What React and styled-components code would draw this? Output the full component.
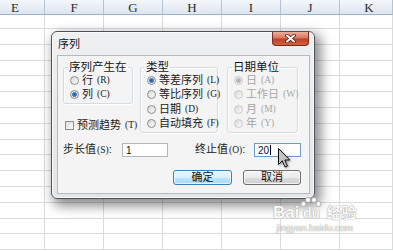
import styled, { createGlobalStyle } from "styled-components";

const GlobalStyle = createGlobalStyle`
  html, body {
    margin: 0;
    padding: 0;
    background: #fff;
  }
  body {
    font-family: "Liberation Sans", "Noto Sans CJK SC", sans-serif;
  }
  * {
    box-sizing: border-box;
  }
`;

const Page = styled.div`
  position: relative;
  width: 393px;
  height: 251px;
  overflow: hidden;
  background: #fff;
`;

const Sheet = styled.div`
  display: grid;
  grid-template-columns: 45px repeat(5, 59px) 1fr;
  grid-template-rows: 15px 14px repeat(14, 15.8px);
`;

const ColHead = styled.div`
  display: flex;
  align-items: center;
  justify-content: center;
  padding: ${(p) => p.$pad || "0"};
  background: linear-gradient(#f4f7fb, #dde5ef);
  border-right: 1px solid #b3c2d4;
  border-bottom: 1px solid #9db2c8;
  font-family: "Liberation Serif", serif;
  font-size: 13px;
  line-height: 1;
  color: #2a2a2a;
`;

const Cell = styled.div`
  border-right: 1px solid #d9dbde;
  border-bottom: 1px solid #d9dbde;
`;

const Dialog = styled.div`
  position: absolute;
  left: 51px;
  top: 31px;
  width: 264px;
  height: 168px;
  display: flex;
  flex-direction: column;
  background: linear-gradient(#eef0f2, #e3e6e9);
  border: 1px solid #4f5256;
  border-radius: 6px;
  box-shadow: inset 0 0 0 1px rgba(255, 255, 255, 0.8),
    4px 5px 12px 2px rgba(0, 0, 0, 0.45);
`;

const TitleBar = styled.div`
  height: 23px;
  flex: none;
  display: flex;
  justify-content: space-between;
  padding: 0 5px 0 6px;
`;

const Title = styled.span`
  margin-top: 7px;
  font-size: 11px;
  line-height: 11px;
  color: #151515;
`;

const CloseButton = styled.div`
  width: 37px;
  height: 14px;
  display: flex;
  align-items: center;
  justify-content: center;
  background: linear-gradient(#eab0a0, #d77459 48%, #c23e22 52%, #d0633f);
  border: 1px solid #7b2c1e;
  border-top: none;
  border-radius: 0 0 4px 4px;
`;

const Client = styled.div`
  flex: 1;
  margin: 0 4px 4px 5px;
  padding: 6px 8px 0 5px;
  display: flex;
  flex-direction: column;
  background: #f4f4f4;
  border: 1px solid #b6b9bd;
`;

const TopSection = styled.div`
  display: flex;
  align-items: flex-start;
`;

const Column = styled.div`
  display: flex;
  flex-direction: column;
  width: ${(p) => p.$w}px;
  margin-right: ${(p) => p.$gap || 0}px;
`;

const Group = styled.fieldset`
  margin: 0 ${(p) => p.$gap || 0}px 0 0;
  padding: 0 0 1px 6px;
  min-width: 0;
  width: ${(p) => p.$w}px;
  border: 1px solid #d3dce3;
  border-radius: 3px;
  box-shadow: inset 1px 1px 0 #fff, 1px 1px 0 #fff;
`;

const Legend = styled.legend`
  padding: 0 1px;
  margin-left: -2px;
  font-size: 11.5px;
  line-height: 11px;
  color: #141414;
`;

const Option = styled.div`
  display: flex;
  align-items: center;
  gap: 3px;
  height: ${(p) => p.$h || 14.5}px;
  font-size: 11px;
  line-height: 11px;
  white-space: nowrap;
  color: ${(p) => (p.$disabled ? "#a5a5a5" : "#1b1b1b")};
`;

const Radio = styled.span`
  flex: none;
  width: 9px;
  height: 9px;
  border-radius: 50%;
  border: 1px solid ${(p) => (p.$disabled ? "#c9c9c9" : "#8c8c8c")};
  background: ${(p) =>
    p.$checked
      ? p.$disabled
        ? "radial-gradient(circle, #b5b5b5 0 2px, #ececec 2.6px)"
        : "radial-gradient(circle, #1d4ea6 0, #4c88d9 2.2px, #e4e6e8 2.8px)"
      : "linear-gradient(135deg, #d8d8d8, #fbfbfb)"};
`;

const Check = styled.span`
  flex: none;
  width: 9px;
  height: 9px;
  border: 1px solid #8e8f8f;
  background: linear-gradient(135deg, #dcdcdc, #fdfdfd);
`;

const Key = styled.span`
  margin-left: 1px;
  font-family: "Liberation Serif", serif;
  font-size: 9.5px;
`;

const CheckRow = styled(Option)`
  margin-top: 15px;
  height: 12px;
  padding-left: 2px;
`;

const ValuesRow = styled.div`
  display: flex;
  align-items: center;
  margin-top: 10px;
  height: 14px;
`;

const Field = styled.div`
  display: flex;
  align-items: center;
  margin-right: ${(p) => p.$gap || 0}px;
`;

const FieldLabel = styled.span`
  width: 59px;
  font-size: 11px;
  line-height: 11px;
  white-space: nowrap;
  color: #1b1b1b;
`;

const TextBox = styled.div`
  width: ${(p) => p.$w}px;
  height: 14px;
  display: flex;
  align-items: center;
  padding-left: 3px;
  background: #fff;
  border: 1px solid ${(p) => (p.$focus ? "#6d9acb" : "#b3b6ba")};
  font-family: "Liberation Sans", sans-serif;
  font-size: 10px;
  color: #111;
`;

const Caret = styled.span`
  width: 1px;
  height: 10px;
  margin-left: 1px;
  background: #000;
`;

const ButtonRow = styled.div`
  display: flex;
  justify-content: flex-end;
  gap: 11px;
  margin-top: 13px;
`;

const Button = styled.div`
  width: ${(p) => p.$w}px;
  height: 15px;
  display: flex;
  align-items: center;
  justify-content: center;
  font-size: 11px;
  line-height: 11px;
  color: #111;
  border: 1px solid ${(p) => (p.$default ? "#3c7fb1" : "#707070")};
  border-radius: 3px;
  background: ${(p) =>
    p.$default
      ? "linear-gradient(#eaf6fd, #d9f0fc 50%, #bee6fd 51%, #a7d9f5)"
      : "linear-gradient(#f4f4f4, #ebebeb 50%, #dddddd 51%, #cfcfcf)"};
  box-shadow: inset 0 0 0 1px rgba(255, 255, 255, 0.7);
`;

const Cursor = styled.svg`
  position: absolute;
  left: 278px;
  top: 148px;
  filter: drop-shadow(1px 1px 1px rgba(0, 0, 0, 0.4));
`;

const Watermark = styled.div`
  position: absolute;
  left: 273px;
  top: 197px;
  display: flex;
  flex-direction: column;
  align-items: center;
  color: #fbfbfb;
  text-shadow: 0 0 1px #8f8f8f, 0 0 1px #a0a0a0;
`;

const MarkRow = styled.div`
  display: flex;
  align-items: flex-end;
`;

const Bai = styled.span`
  font-weight: bold;
  font-size: 17px;
  line-height: 15px;
`;

const Du = styled.div`
  display: flex;
  flex-direction: column;
  align-items: center;
  margin: 0 2px 0 1px;
  font-weight: bold;
  font-size: 14px;
  line-height: 13px;
`;

const Jingyan = styled.span`
  font-size: 15px;
  line-height: 15px;
  font-weight: bold;
  margin-left: 2px;
`;

const Domain = styled.span`
  margin-top: 3px;
  font-size: 9.5px;
  line-height: 9px;
`;

const columns = [
  { name: "E", pad: "0 14px 0 0" },
  { name: "F" },
  { name: "G" },
  { name: "H" },
  { name: "I" },
  { name: "J" },
  { name: "K", pad: "0 0 0 6px" },
];

const rows = Array.from({ length: 15 }, (_, i) => i);

function CloseGlyph() {
  return (
    <svg width="11" height="9" viewBox="0 0 11 9">
      <path d="M2 1.5 L9 7.5 M9 1.5 L2 7.5" stroke="#5a1a0e" strokeWidth="3.6" strokeLinecap="round" />
      <path d="M2 1.5 L9 7.5 M9 1.5 L2 7.5" stroke="#fff" strokeWidth="2" strokeLinecap="round" />
    </svg>
  );
}

function Paw() {
  return (
    <svg width="22" height="10" viewBox="0 0 22 10">
      <g fill="#fbfbfb" stroke="#a3a3a3" strokeWidth="0.9">
        <ellipse cx="3.5" cy="7" rx="2.6" ry="2.6" />
        <ellipse cx="8" cy="3" rx="2.6" ry="2.6" />
        <ellipse cx="14" cy="3" rx="2.6" ry="2.6" />
        <ellipse cx="18.5" cy="7" rx="2.6" ry="2.6" />
      </g>
    </svg>
  );
}

export default function App() {
  return (
    <Page>
      <GlobalStyle />
      <Sheet>
        {columns.map((c) => (
          <ColHead key={c.name} $pad={c.pad}>
            {c.name}
          </ColHead>
        ))}
        {rows.map((r) => columns.map((c) => <Cell key={`${r}-${c.name}`} />))}
      </Sheet>

      <Dialog>
        <TitleBar>
          <Title>序列</Title>
          <CloseButton>
            <CloseGlyph />
          </CloseButton>
        </TitleBar>
        <Client>
          <TopSection>
            <Column $w={70} $gap={7}>
              <Group $w={70}>
                <Legend>序列产生在</Legend>
                <Option>
                  <Radio />
                  行<Key>(R)</Key>
                </Option>
                <Option>
                  <Radio $checked />
                  列<Key>(C)</Key>
                </Option>
              </Group>
              <CheckRow>
                <Check />
                预测趋势<Key>(T)</Key>
              </CheckRow>
            </Column>
            <Group $w={78} $gap={9}>
              <Legend>类型</Legend>
              <Option>
                <Radio $checked />
                等差序列<Key>(L)</Key>
              </Option>
              <Option>
                <Radio />
                等比序列<Key>(G)</Key>
              </Option>
              <Option>
                <Radio />
                日期<Key>(D)</Key>
              </Option>
              <Option>
                <Radio />
                自动填充<Key>(F)</Key>
              </Option>
            </Group>
            <Group $w={71}>
              <Legend>日期单位</Legend>
              <Option $disabled>
                <Radio $checked $disabled />
                日<Key>(A)</Key>
              </Option>
              <Option $disabled>
                <Radio $disabled />
                工作日<Key>(W)</Key>
              </Option>
              <Option $disabled>
                <Radio $disabled />
                月<Key>(M)</Key>
              </Option>
              <Option $disabled>
                <Radio $disabled />
                年<Key>(Y)</Key>
              </Option>
            </Group>
          </TopSection>

          <ValuesRow>
            <Field $gap={27}>
              <FieldLabel>
                步长值<Key>(S)</Key>:
              </FieldLabel>
              <TextBox $w={46}>1</TextBox>
            </Field>
            <Field>
              <FieldLabel>
                终止值<Key>(O)</Key>:
              </FieldLabel>
              <TextBox $w={47} $focus>
                20
                <Caret />
              </TextBox>
            </Field>
          </ValuesRow>

          <ButtonRow>
            <Button $w={59} $default>
              确定
            </Button>
            <Button $w={58}>取消</Button>
          </ButtonRow>
        </Client>
      </Dialog>

      <Cursor width="13" height="20" viewBox="0 0 13 20">
        <path
          d="M0.5 0.5 L0.5 16.5 L4.3 12.8 L7 19 L9.4 18 L6.8 12 L11.8 12 Z"
          fill="#c4c4c4"
          stroke="#111"
          strokeWidth="1"
          strokeLinejoin="round"
        />
      </Cursor>

      <Watermark>
        <MarkRow>
          <Bai>Bai</Bai>
          <Du>
            <Paw />
            du
          </Du>
          <Jingyan>经验</Jingyan>
        </MarkRow>
        <Domain>jingyan.baidu.com</Domain>
      </Watermark>
    </Page>
  );
}
